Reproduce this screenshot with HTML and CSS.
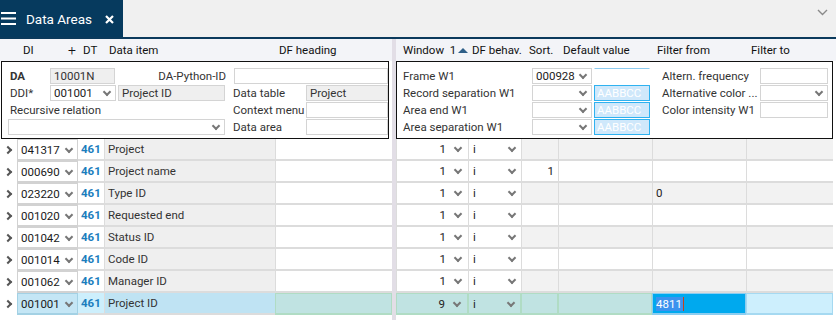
FILE: index.html
```html
<!DOCTYPE html>
<html lang="en">
<head>
<meta charset="UTF-8">
<title>Data Areas</title>
<link rel="stylesheet" href="styles.css">
</head>
<body>

<div class="tabbar">
    <div class="tab">
        <svg class="menu-icon" width="15" height="13" viewBox="0 0 15 13">
            <rect x="0" y="0" width="15" height="2" fill="#fff"/>
            <rect x="0" y="5.5" width="15" height="2" fill="#fff"/>
            <rect x="0" y="11" width="15" height="2" fill="#fff"/>
        </svg>
        <span class="tab-title">Data Areas</span>
        <svg class="close-icon" width="9" height="9" viewBox="0 0 9 9">
            <path d="M1 1 L8 8 M8 1 L1 8" stroke="#fff" stroke-width="2.2" fill="none"/>
        </svg>
    </div>
    <div class="tab-rest">
        <svg width="11" height="7" viewBox="0 0 11 7">
            <path d="M1 1 L5.5 5.5 L10 1" stroke="#8a8a8a" stroke-width="1.4" fill="none"/>
        </svg>
    </div>
</div>

<div class="main">
    <div class="pane left">
        <div class="head">
            <span class="h-di">DI</span>
            <span class="h-plus">+</span>
            <span class="h-dt">DT</span>
            <span class="h-item">Data item</span>
            <span>DF heading</span>
        </div>

        <div class="panel">
            <div class="form-left">
                <b class="lbl">DA</b>
                <span class="inp grey">10001N</span>
                <span class="lbl right">DA-Python-ID</span>
                <span class="inp python"></span>

                <span class="lbl">DDI*</span>
                <span class="inp sel">001001</span>
                <span class="inp grey item-name">Project ID</span>
                <span class="lbl col4">Data table</span>
                <span class="inp grey col5">Project</span>

                <span class="lbl span3">Recursive relation</span>
                <span class="lbl col4">Context menu</span>
                <span class="inp col5"></span>

                <span class="inp sel wide"></span>
                <span class="lbl col4">Data area</span>
                <span class="inp col5"></span>
            </div>
        </div>

        <div class="rows">
            <div class="row">
                <span class="expand"></span>
                <span class="c sel">041317</span>
                <span class="c dt">461</span>
                <span class="c item">Project</span>
                <span class="c heading"></span>
            </div>
            <div class="row">
                <span class="expand"></span>
                <span class="c sel">000690</span>
                <span class="c dt">461</span>
                <span class="c item">Project name</span>
                <span class="c heading"></span>
            </div>
            <div class="row">
                <span class="expand"></span>
                <span class="c sel">023220</span>
                <span class="c dt">461</span>
                <span class="c item">Type ID</span>
                <span class="c heading"></span>
            </div>
            <div class="row">
                <span class="expand"></span>
                <span class="c sel">001020</span>
                <span class="c dt">461</span>
                <span class="c item">Requested end</span>
                <span class="c heading"></span>
            </div>
            <div class="row">
                <span class="expand"></span>
                <span class="c sel">001042</span>
                <span class="c dt">461</span>
                <span class="c item">Status ID</span>
                <span class="c heading"></span>
            </div>
            <div class="row">
                <span class="expand"></span>
                <span class="c sel">001014</span>
                <span class="c dt">461</span>
                <span class="c item">Code ID</span>
                <span class="c heading"></span>
            </div>
            <div class="row">
                <span class="expand"></span>
                <span class="c sel">001062</span>
                <span class="c dt">461</span>
                <span class="c item">Manager ID</span>
                <span class="c heading"></span>
            </div>
            <div class="row active">
                <span class="expand"></span>
                <span class="c sel">001001</span>
                <span class="c dt">461</span>
                <span class="c item">Project ID</span>
                <span class="c heading"></span>
            </div>
        </div>
    </div>

    <div class="divider"></div>

    <div class="pane right">
        <div class="head">
            <span class="h-win">Window &nbsp;1<i class="sort-up"></i></span>
            <span class="h-beh">DF behav.</span>
            <span class="h-sort">Sort.</span>
            <span class="h-def">Default value</span>
            <span class="h-from">Filter from</span>
            <span>Filter to</span>
        </div>

        <div class="panel">
            <div class="form-right">
                <span class="lbl">Frame W1</span>
                <span class="inp sel">000928</span>
                <span class="color empty"></span>
                <span class="lbl col4">Altern. frequency</span>
                <span class="inp"></span>

                <span class="lbl">Record separation W1</span>
                <span class="inp sel"></span>
                <span class="color">AABBCC</span>
                <span class="lbl col4">Alternative color ...</span>
                <span class="inp sel"></span>

                <span class="lbl">Area end W1</span>
                <span class="inp sel"></span>
                <span class="color">AABBCC</span>
                <span class="lbl col4">Color intensity W1</span>
                <span class="inp"></span>

                <span class="lbl">Area separation W1</span>
                <span class="inp sel"></span>
                <span class="color">AABBCC</span>
            </div>
        </div>

        <div class="rows">
            <div class="row odd">
                <span class="c win">1</span>
                <span class="c beh">i</span>
                <span class="c sort"></span>
                <span class="c def"></span>
                <span class="c from"></span>
                <span class="c to"></span>
            </div>
            <div class="row">
                <span class="c win">1</span>
                <span class="c beh">i</span>
                <span class="c sort">1</span>
                <span class="c def"></span>
                <span class="c from"></span>
                <span class="c to"></span>
            </div>
            <div class="row odd">
                <span class="c win">1</span>
                <span class="c beh">i</span>
                <span class="c sort"></span>
                <span class="c def"></span>
                <span class="c from">0</span>
                <span class="c to"></span>
            </div>
            <div class="row">
                <span class="c win">1</span>
                <span class="c beh">i</span>
                <span class="c sort"></span>
                <span class="c def"></span>
                <span class="c from"></span>
                <span class="c to"></span>
            </div>
            <div class="row odd">
                <span class="c win">1</span>
                <span class="c beh">i</span>
                <span class="c sort"></span>
                <span class="c def"></span>
                <span class="c from"></span>
                <span class="c to"></span>
            </div>
            <div class="row">
                <span class="c win">1</span>
                <span class="c beh">i</span>
                <span class="c sort"></span>
                <span class="c def"></span>
                <span class="c from"></span>
                <span class="c to"></span>
            </div>
            <div class="row odd">
                <span class="c win">1</span>
                <span class="c beh">i</span>
                <span class="c sort"></span>
                <span class="c def"></span>
                <span class="c from"></span>
                <span class="c to"></span>
            </div>
            <div class="row active">
                <span class="c win">9</span>
                <span class="c beh">i</span>
                <span class="c sort"></span>
                <span class="c def"></span>
                <span class="c from editing"><span class="picked">4811</span></span>
                <span class="c to"></span>
            </div>
        </div>
    </div>
</div>

</body>
</html>
```

FILE: styles.css
```css
body {
    font-family: Roboto, "Liberation Sans", sans-serif;
    font-size: 11.5px;
    margin: 0;
    width: 836px;
    height: 320px;
    overflow: hidden;
    background-color: #fff;
    color: #222;
}

/* tab bar */
.tabbar {
    display: flex;
    height: 37px;
    background-color: #f0f0f0;
    border-bottom: 2px solid #0b3a5c;
}
.tab {
    width: 123px;
    display: flex;
    align-items: center;
    background-color: #063a5e;
    color: #fff;
}
.menu-icon {
    margin-left: 1px;
}
.tab-title {
    margin-left: 10px;
    font-size: 13.5px;
}
.close-icon {
    margin-left: 13px;
    margin-top: 2px;
}
.tab-rest {
    flex: 1;
    display: flex;
    justify-content: flex-end;
    padding: 9px 8px 0 0;
}

/* main split */
.main {
    display: flex;
}
.pane.left {
    width: 392px;
}
.pane.right {
    width: 440px;
}
.divider {
    width: 4px;
    height: 281px;
    background-color: #e2dee6;
}

.head {
    height: 22px;
    display: flex;
    align-items: center;
    background-color: #f3f4f8;
    color: #111;
}
.left .head {
    padding-left: 23px;
}
.h-di { width: 45px; }
.h-plus { width: 15px; font-size: 14px; font-weight: 300; }
.h-dt { width: 26px; }
.h-item { width: 170px; }
.right .head {
    padding-left: 7px;
}
.h-win { width: 69px; display: flex; align-items: center; }
.h-beh { width: 57px; }
.h-sort { width: 34px; }
.h-def { width: 94px; }
.h-from { width: 94px; }
.sort-up {
    width: 0;
    height: 0;
    margin-left: 2px;
    border-left: 5px solid transparent;
    border-right: 5px solid transparent;
    border-bottom: 5px solid #2f5f88;
}

/* detail panels */
.panel {
    height: 78px;
    box-sizing: border-box;
    border: 1px solid #111;
    padding: 5px 0 3px 0;
}
.left .panel {
    margin: 0 3px 0 1px;
}
.right .panel {
    margin-right: 3px;
}
.form-left, .form-right {
    display: grid;
    grid-auto-rows: 17px;
    align-items: center;
}
.form-left {
    grid-template-columns: 40px 66px 110px 80px 82px;
    padding-left: 8px;
}
.form-right {
    grid-template-columns: 129px 60px 58px 110px 68px;
    padding-left: 6px;
}
.lbl {
    color: #333;
    white-space: nowrap;
}
.lbl.right {
    text-align: right;
}
.col4 {
    grid-column: 4;
    padding-left: 7px;
}
.form-right .col4 {
    padding-left: 12px;
}
.col5 {
    grid-column: 5;
}
.span3 {
    grid-column: 1 / 4;
}
.inp {
    position: relative;
    height: 16px;
    box-sizing: border-box;
    border: 1px solid #d4d4d4;
    background-color: #fff;
    padding: 0 3px;
    line-height: 14px;
    color: #222;
}
.inp.grey {
    background-color: #efefef;
    color: #333;
}
.form-left .inp.grey:first-of-type {
    width: 65px;
}
.inp.python {
    grid-column: 4 / 6;
    margin-left: 8px;
}
.inp.item-name {
    margin: 0 1px 0 2px;
}
.inp.wide {
    grid-column: 1 / 4;
    margin: 0 1px 0 -2px;
}
.form-left .inp.sel:nth-of-type(3) {
    width: 65px;
}
.inp.sel::after {
    content: "";
    position: absolute;
    right: 5px;
    top: 3px;
    width: 4px;
    height: 4px;
    border-right: 2px solid #777;
    border-bottom: 2px solid #777;
    transform: rotate(45deg);
}
.color {
    height: 16px;
    box-sizing: border-box;
    margin-left: 2px;
    padding-left: 2px;
    border: 1px solid #2fb2f0;
    background-color: #cfe8fb;
    color: #fff;
    line-height: 14px;
}
.color.empty {
    background-color: #fff;
    border-color: #fff;
    border-top-color: #8ccbf0;
}

/* data rows */
.row {
    display: grid;
    height: 22px;
}
.left .row {
    grid-template-columns: 17px 61px 26px 171px 117px;
}
.right .row {
    grid-template-columns: 72px 53px 37px 94px 94px 87px;
}
.expand {
    position: relative;
}
.expand::after {
    content: "";
    position: absolute;
    left: 5px;
    top: 8px;
    width: 4px;
    height: 4px;
    border-right: 2px solid #555;
    border-bottom: 2px solid #555;
    transform: rotate(-45deg);
}
.c {
    position: relative;
    box-sizing: border-box;
    height: 22px;
    border-bottom: 2px solid #dcdcdc;
    border-left: 1px solid #dcdcdc;
    line-height: 20px;
    white-space: nowrap;
}
.c.sel {
    border: 1px solid #d2d2d2;
    border-bottom-width: 2px;
    padding-left: 3px;
    color: #1a1a1a;
}
.c.sel::after, .c.win::after, .c.beh::after {
    content: "";
    position: absolute;
    top: 6px;
    width: 4px;
    height: 4px;
    border-right: 2px solid #777;
    border-bottom: 2px solid #777;
    transform: rotate(45deg);
}
.c.sel::after {
    right: 5px;
}
.c.dt {
    border-left: 0;
    padding-left: 3px;
    font-weight: bold;
    color: #1b7dbd;
}
.c.item {
    padding-left: 3px;
    background-color: #efefef;
    color: #333;
}
.c.heading {
    background-color: #fff;
}
.c.win {
    text-align: right;
    padding-right: 22px;
}
.c.win::after {
    right: 7px;
}
.c.beh {
    padding-left: 4px;
}
.c.beh::after {
    right: 6px;
}
.c.sort {
    text-align: right;
    padding-right: 4px;
}
.c.from {
    padding-left: 3px;
}
.row.odd .sort, .row.odd .def, .row.odd .from, .row.odd .to {
    background-color: #f2f2f2;
}

/* selected row */
.row.active .c.sel {
    background-color: #c4e6f5;
    border-color: #a3d1e4;
}
.row.active .c.dt {
    background-color: #cdeffc;
}
.row.active .c.item {
    background-color: #bfe3f3;
}
.row.active .c.heading, .row.active .c.win, .row.active .c.beh,
.row.active .c.sort, .row.active .c.def {
    background-color: #c0e3e2;
    border: 1px solid #b0dcc4;
    border-bottom-width: 2px;
}
.row.active .c.from {
    background-color: #00a9ee;
    border: 1px solid #8ccdf0;
    border-bottom-width: 2px;
    color: #fff;
}
.row.active .c.to {
    background-color: #cdeffd;
    border: 1px solid #a5d9f1;
    border-bottom-width: 2px;
}
.picked {
    background-color: #3b92ee;
    padding-right: 1px;
    border-right: 1px solid #c2431c;
}
```
